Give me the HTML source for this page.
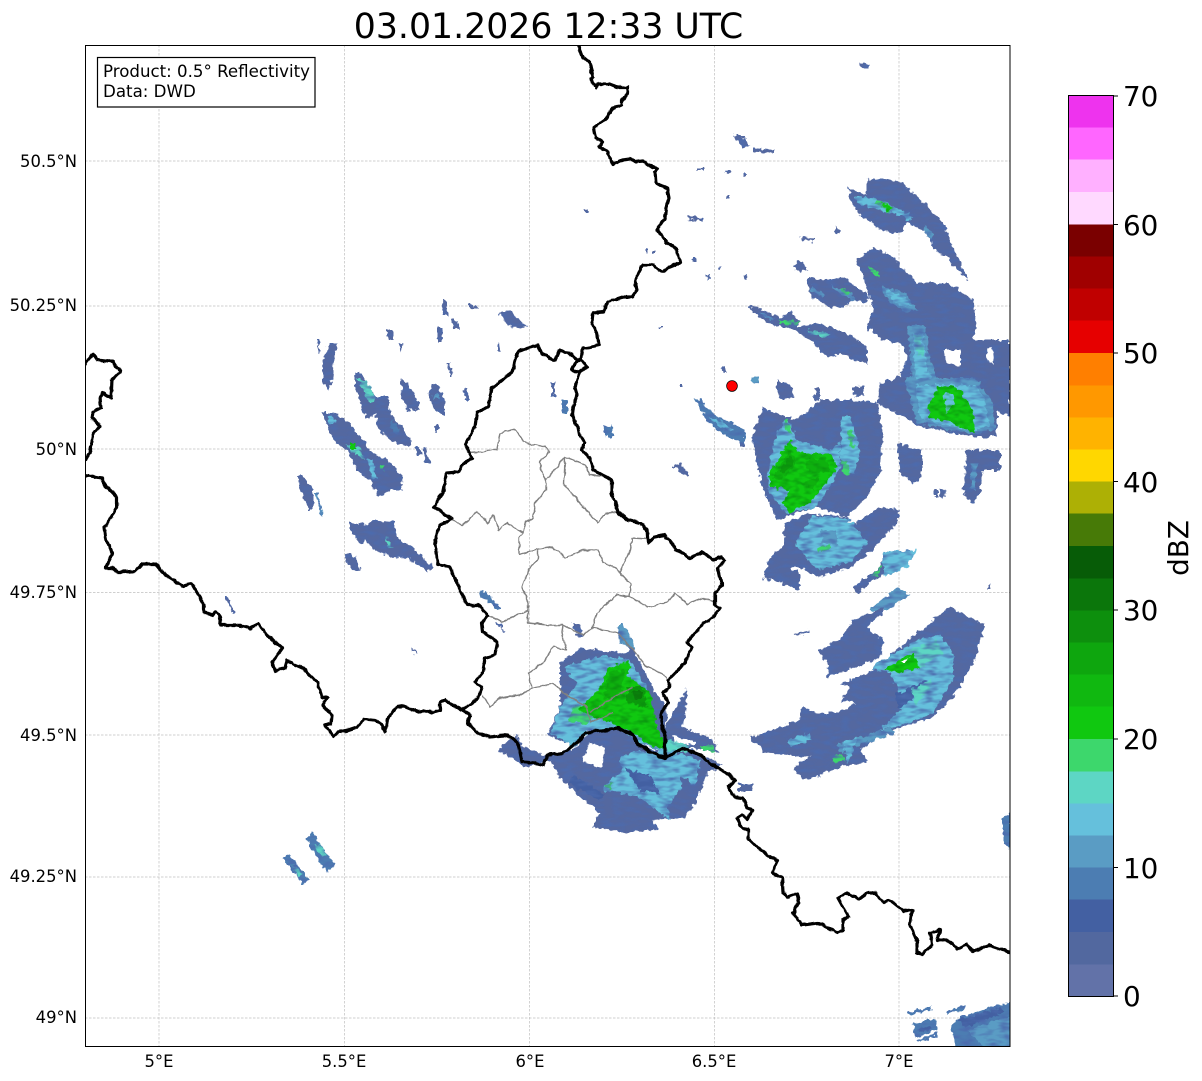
<!DOCTYPE html>
<html><head><meta charset="utf-8"><title>Radar</title>
<style>
html,body{margin:0;padding:0;background:#fff;width:1202px;height:1081px;overflow:hidden}
svg{display:block}
text{font-family:"DejaVu Sans",sans-serif;fill:#000}
.t{font-size:16.4px}
.c{font-size:27.8px}
.a{fill:#5468a0}.b{fill:#4360a2}.d{fill:#4c7db2}.e{fill:#5a9cc4}.f{fill:#65c0dc}.h{fill:#5dd6c4}.i{fill:#3dd76c}.j{fill:#10c810}.k{fill:#0eb10e}.l{fill:#0c9a0c}.m{fill:#0b7a0b}.w{fill:#fff}
</style></head><body>
<svg xmlns="http://www.w3.org/2000/svg" width="1202" height="1081" viewBox="0 0 1202 1081">
<defs>
<clipPath id="ax"><rect x="85" y="45" width="925" height="1001"/></clipPath>
<filter id="ro" filterUnits="userSpaceOnUse" x="85" y="45" width="925" height="1001" color-interpolation-filters="sRGB">
<feTurbulence type="fractalNoise" baseFrequency="0.2" numOctaves="2" seed="4" result="t1"/>
<feDisplacementMap in="SourceGraphic" in2="t1" scale="7" xChannelSelector="R" yChannelSelector="G" result="d"/>
<feTurbulence type="fractalNoise" baseFrequency="0.08 0.22" numOctaves="2" seed="11" result="n"/>
<feColorMatrix in="n" type="matrix" values="0 0 0 0 .30  0 0 0 0 .42  0 0 0 0 .68  2.3 0 0 0 -.95" result="o"/>
<feComposite in="o" in2="d" operator="in" result="oc"/>
<feMerge><feMergeNode in="d"/><feMergeNode in="oc"/></feMerge>
</filter>
<filter id="gr" filterUnits="userSpaceOnUse" x="85" y="45" width="925" height="1001" color-interpolation-filters="sRGB">
<feTurbulence type="fractalNoise" baseFrequency="0.2" numOctaves="2" seed="4" result="t1"/>
<feDisplacementMap in="SourceGraphic" in2="t1" scale="7" xChannelSelector="R" yChannelSelector="G" result="d"/>
<feTurbulence type="fractalNoise" baseFrequency="0.1 0.2" numOctaves="2" seed="21" result="n"/>
<feColorMatrix in="n" type="matrix" values="0 0 0 0 .04  0 0 0 0 .55  0 0 0 0 .06  2 0 0 0 -.85" result="o"/>
<feComposite in="o" in2="d" operator="in" result="oc"/>
<feMerge><feMergeNode in="d"/><feMergeNode in="oc"/></feMerge>
</filter>
<filter id="ho" filterUnits="userSpaceOnUse" x="85" y="45" width="925" height="1001" color-interpolation-filters="sRGB">
<feTurbulence type="fractalNoise" baseFrequency="0.2" numOctaves="2" seed="4"/>
<feDisplacementMap in="SourceGraphic" scale="5" xChannelSelector="R" yChannelSelector="G"/>
</filter>
<filter id="wg" filterUnits="userSpaceOnUse" x="85" y="45" width="925" height="1001" color-interpolation-filters="sRGB">
<feTurbulence type="fractalNoise" baseFrequency="0.14" numOctaves="2" seed="7"/>
<feDisplacementMap in="SourceGraphic" scale="3.5" xChannelSelector="R" yChannelSelector="G"/>
</filter>
</defs>
<text x="548.5" y="38" text-anchor="middle" style="font-size:34.7px">03.01.2026 12:33 UTC</text>
<rect x="85" y="45" width="925" height="1001" fill="#fff"/>
<g clip-path="url(#ax)">
<g stroke="#c0c0c0" stroke-width=".7" stroke-dasharray="2.5 1.5" fill="none">
<path d="M159 45V1046M344.5 45V1046M529.5 45V1046M714.5 45V1046M899 45V1046M85 161H1010M85 306H1010M85 449H1010M85 592.5H1010M85 735H1010M85 877H1010M85 1018H1010"/>
</g>
<g filter="url(#ro)">
<!-- NE band top -->
<polygon class="a" points="848,188 867,195 867,180 883,178 903,183 923,202 943,223 950,240 968,280 957,270 947,257 937,253 927,233 907,222 900,233 880,230 857,212 850,200"/>
<polygon class="f" points="855,197 873,198 897,208 913,217 910,220 890,212 870,207 857,203"/>
<polygon class="i" points="875,199 895,208 890,212 875,204"/>
<polygon class="e" points="925,225 934,236 931,239 923,230"/>
<polygon class="a" points="792,267 800,261 808,268 800,273"/>
<polygon class="a" points="807,277 823,280 843,277 870,297 867,303 853,300 843,308 830,307 813,298 808,287"/>
<polygon class="e" points="811,286 825,295 822,297 811,291"/>
<polygon class="e" points="830,285 850,293 856,301 838,293"/>
<polygon class="i" points="842,288 850,293 847,295 840,291"/>
<polygon class="a" points="748,305 763,310 780,317 790,312 800,322 797,327 817,323 847,333 867,347 867,363 853,360 840,353 827,357 810,340 800,333 787,327 773,325 760,318"/>
<polygon class="i" points="778,320 800,322 797,325 780,324"/>
<polygon class="e" points="757,311 775,318 770,320"/>
<polygon class="h" points="808,330 832,334 826,337 810,334"/>
<!-- NE main -->
<polygon class="a" points="857,260 873,247 893,257 917,283 947,283 973,300 977,327 973,340 1010,340 1010,417 997,410 997,437 973,437 917,425 877,403 880,383 900,377 907,357 900,343 883,340 867,327 873,310 867,287"/>
<polygon class="e" points="882,286 905,293 918,310 905,312 885,298"/>
<polygon class="f" points="886,289 904,296 912,306 902,307 888,296"/>
<polygon class="e" points="908,325 925,325 930,360 938,380 912,385 910,355"/>
<polygon class="f" points="913,333 923,333 926,360 932,382 916,382 914,355"/>
<polygon class="h" points="914,335 921,335 924,355 917,355"/>
<polygon class="e" points="905,378 975,378 992,400 995,430 972,434 917,423"/>
<polygon class="f" points="915,385 975,385 985,400 990,425 972,431 937,423 920,418"/>
<polygon class="i" points="869,266 878,272 880,278 872,274"/>
<!-- small east -->
<polygon class="a" points="898,443 922,450 922,477 913,483 900,473"/>
<polygon class="a" points="967,450 1000,450 1000,470 983,470 980,493 973,503 963,493"/>
<polygon class="e" points="972,463 977,463 975,490 970,490"/>
<polygon class="a" points="777,380 790,385 793,397 783,400 777,392"/>
<polygon class="a" points="815,387 820,388 820,399 814,400"/>
<polygon class="a" points="853,388 862,385 864,396 855,398"/>
<polygon class="a" points="740,433 745,434 745,447 740,447"/>
<polygon class="a" points="934,489 937,489 937,498 934,498"/>
<polygon class="a" points="940,489 945,490 944,498 939,497"/>
<polygon class="e" points="752,377 758,378 758,383 752,382"/>
<!-- central storm -->
<polygon class="a" points="763,407 780,415 797,420 820,400 853,400 877,403 883,433 880,473 867,497 847,517 817,507 793,515 777,520 763,490 752,437"/>
<polygon class="f" points="772,447 783,420 790,423 797,440 830,450 840,443 840,467 830,487 815,508 787,513 773,498 767,487"/>
<polygon class="f" points="842,417 850,417 860,450 855,473 847,473 840,457"/>
<polygon class="i" points="783,420 788,420 792,433 786,431"/>
<polygon class="i" points="840,460 848,463 850,475 845,475"/>
<polygon class="i" points="847,430 852,432 855,448 850,447"/>
<!-- lower storm -->
<polygon class="a" points="785,523 807,513 847,517 855,523 880,507 900,510 897,523 873,550 850,567 818,577 800,567 773,570 763,580 770,557 783,547"/>
<polygon class="f" points="794,543 813,515 850,519 868,543 850,562 818,570"/>
<polygon class="i" points="818,548 830,544 829,550 820,552"/>
<polygon class="e" points="820,530 835,530 838,545 822,543"/>
<polygon class="a" points="770,558 800,573 800,590 763,578"/>
<!-- SE small -->
<polygon class="a" points="853,587 880,567 883,560 890,570 870,583 857,593"/>
<polygon class="f" points="883,553 917,550 907,567 883,577"/>
<polygon class="i" points="872,574 882,566 878,576"/>
<polygon class="e" points="870,610 897,587 910,595 887,610"/>
<polygon class="a" points="883,607 870,618 875,610"/>
<!-- big lower band -->
<polygon class="a" points="818,650 840,640 853,620 883,607 883,613 867,627 883,640 880,657 857,667 827,677 828,665"/>
<polygon class="a" points="750,738 800,720 802,708 823,713 840,713 855,703 840,702 850,687 840,683 868,673 950,607 985,625 973,663 953,697 933,717 883,733 860,750 867,762 840,767 807,780 793,770 810,757 767,753"/>
<polygon class="f" points="870,668 917,640 940,635 953,653 953,677 933,713 897,727 880,730 900,710 900,693 890,673"/>
<polygon class="b" points="895,695 925,680 928,688 900,708"/>
<polygon class="e" points="835,745 890,728 895,733 840,752"/>
<polygon class="h" points="907,650 937,640 943,653 917,670"/>
<polygon class="h" points="912,690 933,678 930,690 915,705"/>
<polygon class="f" points="788,740 810,733 812,740 790,747"/>
<polygon class="f" points="843,743 857,737 853,753 847,763"/>
<polygon class="i" points="832,757 843,753 845,760 833,762"/>
<polygon class="a" points="793,633 810,630 810,633 794,635"/>
<polygon class="a" points="797,762 817,756 816,766 800,770"/>
<!-- Lux storm -->
<polygon class="a" points="560,663 580,648 620,653 630,650 617,625 627,630 637,657 647,677 653,690 662,700 667,713 665,727 687,688 688,690 683,727 713,740 718,753 693,747 665,753 640,743 627,733 618,728 590,730 580,738 575,747 547,735 560,707"/>
<polygon class="e" points="617,625 623,625 633,640 635,650 620,643"/>
<polygon class="a" points="497,750 513,742 547,757 577,747 590,730 618,728 640,743 665,757 687,748 723,765 707,773 697,800 687,817 653,820 657,830 627,833 592,827 600,813 577,795 560,777 550,760 527,767"/>
<polygon class="f" points="562,703 577,683 563,667 603,655 630,660 647,687 655,720 665,753 640,743 618,728 590,730 573,747 550,733"/>
<polygon class="i" points="575,705 600,712 585,725 568,720"/>
<polygon class="h" points="664,738 690,745 686,752 668,752"/>
<polygon class="i" points="700,745 714,745 714,752 702,752"/>
<polygon class="f" points="603,787 620,773 620,757 640,750 683,760 680,790 667,807 670,820 653,807 637,797 603,790"/>
<polygon class="b" points="625,768 650,775 660,795 640,790"/>
<polygon class="f" points="650,745 700,760 695,785 680,775"/>
<polygon class="b" points="573,775 605,795 598,800 568,783"/>
<polygon class="a" points="517,735 522,745 500,750 505,742"/>
<polygon class="i" points="604,786 612,783 610,790"/>
<!-- West -->
<polygon class="a" points="355,372 360,372 375,397 388,397 390,413 412,440 410,447 392,442 378,428 375,413 367,420 363,410 355,387"/>
<polygon class="h" points="357,377 368,383 375,400 368,402"/>
<polygon class="d" points="392,420 400,428 398,435 390,428"/>
<polygon class="a" points="322,412 333,412 350,423 360,437 372,453 385,457 403,477 402,490 392,490 378,497 370,480 357,470 347,450 335,443 327,427"/>
<polygon class="h" points="345,443 362,450 365,460 353,453"/>
<polygon class="f" points="327,416 334,417 335,424 329,424"/>
<polygon class="f" points="366,458 372,460 378,480 372,478"/>
<polygon class="i" points="380,465 383,465 384,470 381,470"/>
<polygon class="a" points="297,475 302,475 313,490 313,510 308,510 300,490"/>
<polygon class="e" points="315,493 318,493 323,515 320,515"/>
<polygon class="a" points="350,522 365,525 373,520 393,522 400,540 412,547 432,567 428,572 412,560 395,557 378,553 365,540 360,543 350,530"/>
<polygon class="h" points="385,537 390,541 392,548 387,546"/>
<polygon class="a" points="345,555 352,552 360,570 357,572 350,567"/>
<polygon class="a" points="322,363 330,342 337,342 332,380 328,390 322,380"/>
<polygon class="a" points="317,339 319,339 320,353 318,353"/>
<polygon class="a" points="387,330 393,330 393,340 387,340"/>
<polygon class="a" points="398,343 404,343 402,353"/>
<polygon class="a" points="400,378 407,383 418,400 420,410 407,410 402,397"/>
<polygon class="a" points="428,393 435,383 445,400 445,417 432,407"/>
<polygon class="e" points="434,395 440,395 440,399 434,399"/>
<polygon class="a" points="463,390 466,389 470,400 465,400"/>
<polygon class="a" points="447,363 449,363 453,377 451,377"/>
<polygon class="a" points="498,313 508,310 528,327 512,328"/>
<polygon class="a" points="442,300 447,300 447,315 443,315"/>
<polygon class="a" points="438,327 443,327 442,342 438,342"/>
<polygon class="a" points="468,303 477,307 477,309 468,307"/>
<polygon class="a" points="452,320 458,320 460,330 454,328"/>
<polygon class="a" points="497,343 499,343 500,350 497,350"/>
<polygon class="a" points="435,425 438,425 438,433 436,433"/>
<polygon class="a" points="416,445 419,445 421,455 417,455"/>
<polygon class="a" points="423,448 427,449 430,463 426,463"/>
<polygon class="d" points="478,593 485,592 502,608 498,610"/>
<polygon class="a" points="495,622 498,622 506,632 504,632"/>
<polygon class="a" points="412,648 414,648 417,655 415,655"/>
<polygon class="a" points="225,597 228,597 235,613 232,613"/>
<polygon class="a" points="572,623 580,624 584,637 576,636"/>
<polygon class="a" points="552,382 555,382 555,398 552,398"/>
<polygon class="d" points="562,400 568,400 568,413 562,413"/>
<polygon class="d" points="603,427 613,426 614,437 606,437"/>
<polygon class="a" points="673,465 680,464 689,473 686,476"/>
<polygon class="d" points="693,398 700,400 715,415 745,430 745,445 720,432 707,420"/>
<polygon class="f" points="709,418 722,421 735,431 722,429"/>
<!-- scattered -->
<polygon class="a" points="858,62 870,65 868,69 860,66"/>
<polygon class="a" points="732,135 742,135 750,146 744,148"/>
<polygon class="a" points="752,148 775,150 775,153 752,151"/>
<polygon class="a" points="697,168 704,168 704,170 697,170"/>
<polygon class="a" points="725,172 731,170 731,172 725,174"/>
<polygon class="a" points="743,172 747,172 747,176 743,176"/>
<polygon class="a" points="726,195 730,195 730,198 726,198"/>
<polygon class="a" points="687,216 703,218 703,221 687,219"/>
<polygon class="a" points="583,209 589,210 588,213 584,213"/>
<polygon class="a" points="645,250 648,250 648,253 645,253"/>
<polygon class="a" points="651,250 656,250 656,252 651,252"/>
<polygon class="a" points="691,258 696,258 696,262 692,262"/>
<polygon class="a" points="706,274 710,274 711,279 707,279"/>
<polygon class="a" points="718,267 720,267 720,270 718,270"/>
<polygon class="a" points="743,275 748,276 747,279 744,279"/>
<polygon class="a" points="801,237 814,238 814,241 801,240"/>
<polygon class="a" points="834,225 838,227 841,234 837,233"/>
<polygon class="a" points="720,367 725,366 727,372 722,372"/>
<polygon class="a" points="680,384 683,384 683,387 680,387"/>
<polygon class="a" points="988,585 991,584 990,589 987,589"/>
<polygon class="a" points="660,326 663,326 663,329 660,329"/>
<polygon class="a" points="739,784 753,784 753,792 739,792"/>
<!-- East edge -->
<polygon class="d" points="1002,820 1010,813 1010,850 1003,842"/>
<!-- SE corner -->
<polygon class="d" points="950,1027 960,1017 1000,1005 1012,1003 1012,1048 957,1048"/>
<polygon class="e" points="968,1030 1012,1015 1012,1048 985,1048"/>
<polygon class="b" points="958,1020 1000,1008 1005,1012 965,1028"/>
<polygon class="d" points="913,1023 935,1019 937,1030 915,1037"/>
<polygon class="b" points="917,1029 933,1025 933,1028 919,1033"/>
<polygon class="d" points="917,1040 938,1033 939,1036 917,1042"/>
<polygon class="d" points="909,1012 931,1007 931,1010 910,1015"/>
<polygon class="d" points="945,1012 966,1005 966,1008 945,1015"/>
<!-- SW -->
<polygon class="d" points="283,858 290,855 310,880 303,885"/>
<polygon class="h" points="290,864 294,863 302,875 298,877"/>
<polygon class="d" points="305,838 313,833 335,865 327,872"/>
<polygon class="h" points="315,845 320,843 327,855 322,857"/>
</g>
<!-- green cores -->
<g filter="url(#gr)">
<polygon class="j" points="882,203 893,208 889,211 881,206"/>
<polygon class="j" points="937,387 957,387 973,410 975,433 953,423 943,420 930,418 928,407"/>
<polygon class="f" points="944,393 952,393 955,405 946,412"/>
<polygon class="j" points="770,473 790,440 798,453 830,453 837,467 823,487 810,503 790,513 783,503 790,490 770,487"/>
<polygon class="k" points="773,477 790,450 797,463 780,480"/>
<polygon class="k" points="800,483 820,477 813,490"/>
<polygon class="l" points="779,472 790,456 793,462 783,475"/>
<polygon class="k" points="805,460 825,458 830,470 810,473"/>
<polygon class="j" points="883,670 913,653 920,668 897,672"/>
<polygon class="j" points="608,667 630,662 628,677 650,692 657,727 665,748 650,745 633,733 620,727 590,715 577,710 595,693 603,683"/>
<polygon class="k" points="610,672 625,670 622,690 605,700"/>
<polygon class="k" points="607,680 618,678 618,697 603,700"/>
<polygon class="l" points="627,687 643,687 647,707 627,703"/>
<polygon class="m" points="632,691 642,690 642,699 634,699"/>
<polygon class="j" points="350,443 356,443 356,449 350,449"/>
</g>
<!-- holes in the echoes -->
<g filter="url(#ho)">
<polygon class="w" points="943,350 960,350 960,367 947,362"/>
<polygon class="w" points="986,347 992,347 994,365 988,362"/>
<polygon class="w" points="778,520 818,507 818,510 783,522"/>
<polygon class="w" points="847,522 880,500 880,507 855,523"/>
<polygon class="w" points="900,663 910,656 905,663"/>
<polygon class="w" points="590,742 605,748 602,767 582,762"/>
<polygon class="w" points="672,735 695,742 695,745 675,742"/>
</g>
<!-- canton lines -->
<g filter="url(#wg)">
<g fill="none" stroke="#808080" stroke-width="1.4" stroke-linejoin="round">
<polyline points="470,453 483,452 497,449 500,433 515,429 523,442 545,447 550,452 540,462 542,473 546,480 546,490 535,503 533,518 526,522 523,533"/>
<polyline points="452,520 462,525 477,512 488,523 493,515 499,530 507,523 523,533 519,538 519,554 538,549 552,547 565,558 583,550 598,550 603,563 617,568 620,573 631,585 630,597"/>
<polyline points="546,480 565,457 585,465 590,475 600,476"/>
<polyline points="565,457 564,485 585,508 598,523 605,514 618,512"/>
<polyline points="620,573 630,550 632,538 647,539"/>
<polyline points="538,549 538,558 527,573 522,587 528,603 528,623 548,625 563,625 583,635 592,628 597,613 617,595 630,597 648,607 668,602 675,593 688,604 703,598 715,602"/>
<polyline points="488,615 503,622 528,610"/>
<polyline points="563,625 562,633 566,650 553,647 543,663 529,673 532,688 553,683 563,693 587,707 590,722 613,713"/>
<polyline points="532,688 520,695 500,698 490,707 483,695"/>
<polyline points="592,628 617,632 633,650 647,667 665,675 668,680"/>
<polyline points="633,687 613,697 590,713"/>
</g>
<!-- national borders -->
<g fill="none" stroke="#000" stroke-width="3.2" stroke-linejoin="round" stroke-linecap="round">
<polyline points="85,365 86,363 93,354 97,360 113,362 117,368 121,371 112,380 111,398 103,393 100,397 101,408 93,412 92,418 100,426 93,435 90,453 85,460"/>
<polyline points="85,475 102,478 105,485 117,497 117,507 110,520 104,528 106,540 112,553 106,568 112,568 118,572 125,572 135,571 142,564 156,564 165,575 183,586 192,584 204,605 204,612 213,615 215,612 219,615 221,625 237,625 250,628 258,624 267,635 282,648 277,655 272,662 275,671 285,668 287,661 303,668 317,682 322,697 327,698 323,705 332,715 331,723 325,725 333,737 338,732 348,730 357,727 364,719 375,720 380,723 385,732 388,718 397,707 403,706 418,712 428,711 433,712 440,710 440,702 445,700 460,709 462,710"/>
<polyline points="578,45 583,57 590,63 593,77 591,79 596,88 598,84 610,84 617,87 628,87 628,93 622,100 622,105 613,108 605,120 594,128 596,138 603,142 599,147 607,151 613,164 622,160 630,159 636,162 643,161 652,167 658,168 655,172 656,183 667,188 669,198 666,208 665,218 657,230 666,242 677,250 680,263 668,267 663,272 652,265 643,265 639,272 635,282 637,290 632,297 623,297 608,302 603,312 593,313 592,322 597,332 599,345 590,347 583,348 581,360"/>
<polyline points="538,345 518,351 512,372 492,388 488,407 477,412 475,427 465,445 472,458 462,465 458,472 447,473 443,493 434,507 452,519 440,525 435,540 438,565 450,567 467,605 478,605 488,615 482,623 483,632 497,642 495,655 485,658 483,672 475,682 482,688 478,698 462,710"/>
<polyline points="538,345 542,354 555,360 559,351 568,352 577,360 582,360 587,367 580,372 572,370 577,360"/>
<polyline points="580,372 575,387 577,395 573,407 572,415 578,427 580,437 585,443 582,450 590,458 593,470 602,475 612,480 612,493 618,512 628,520 640,523 647,530 648,543 655,537 665,535 677,550 690,558 703,552 713,560 722,557 725,560 718,568 720,577 722,585 715,593 715,605 720,608 715,615 700,627 687,642 692,647 685,663 668,680 670,687 662,693 668,702 660,715 665,737 665,758"/>
<polyline points="462,710 470,715 468,723 478,733 490,737 508,735 518,743 522,762 535,763 543,765 548,755 563,753 577,743 585,733 618,728 633,735 638,745 653,753 665,758 683,748 700,755 710,763 725,772 735,780 728,787 735,797 743,798 747,808 752,810 748,819 742,815 737,818 742,828 748,829 748,838 757,847 772,858 777,860 773,873 782,877 783,892 787,897 797,894 799,902 793,913 802,925 818,923 838,933 843,930 843,920 848,916 838,898 847,893 859,899 868,893 876,893 883,903 889,900 903,911 912,910 910,925 917,942 917,952 922,954 932,945 930,933 940,930 937,940 947,939 957,949 967,944 973,952 988,945 1003,950 1012,952"/>
</g>
</g>
<circle cx="732" cy="386" r="5.4" fill="#f00" stroke="#000" stroke-width=".7"/>
<rect x="97.5" y="57.5" width="217.5" height="49.5" fill="#fff" stroke="#000" stroke-width="1.2"/>
<text x="103" y="77" textLength="207" lengthAdjust="spacingAndGlyphs" style="font-size:16.67px">Product: 0.5° Reflectivity</text>
<text x="103" y="97" style="font-size:16.67px">Data: DWD</text>
</g>
<rect x="85.5" y="45.5" width="924.5" height="1001" fill="none" stroke="#000" stroke-width="1"/>
<g class="t">
<text class="t" x="77" y="167" text-anchor="end">50.5°N</text>
<text class="t" x="77" y="311" text-anchor="end">50.25°N</text>
<text class="t" x="77" y="455" text-anchor="end">50°N</text>
<text class="t" x="77" y="598" text-anchor="end">49.75°N</text>
<text class="t" x="77" y="741" text-anchor="end">49.5°N</text>
<text class="t" x="77" y="882" text-anchor="end">49.25°N</text>
<text class="t" x="77" y="1023" text-anchor="end">49°N</text>
<text class="t" x="159" y="1067" text-anchor="middle">5°E</text>
<text class="t" x="344" y="1067" text-anchor="middle">5.5°E</text>
<text class="t" x="530" y="1067" text-anchor="middle">6°E</text>
<text class="t" x="714" y="1067" text-anchor="middle">6.5°E</text>
<text class="t" x="899" y="1067" text-anchor="middle">7°E</text>
</g>
<!-- colorbar -->
<g shape-rendering="crispEdges">
<rect x="1068" y="964" width="45" height="32.5" fill="#6272a8"/>
<rect x="1068" y="932" width="45" height="32.5" fill="#52689f"/>
<rect x="1068" y="899" width="45" height="33" fill="#4360a2"/>
<rect x="1068" y="867" width="45" height="32.5" fill="#4c7db2"/>
<rect x="1068" y="835" width="45" height="32.5" fill="#5a9cc4"/>
<rect x="1068" y="803" width="45" height="32.5" fill="#65c0dc"/>
<rect x="1068" y="771" width="45" height="32.5" fill="#5dd6c4"/>
<rect x="1068" y="739" width="45" height="32.5" fill="#3dd76c"/>
<rect x="1068" y="706" width="45" height="33" fill="#10c810"/>
<rect x="1068" y="674" width="45" height="32.5" fill="#10b810"/>
<rect x="1068" y="642" width="45" height="32.5" fill="#0ea60e"/>
<rect x="1068" y="610" width="45" height="32.5" fill="#0d8f0d"/>
<rect x="1068" y="578" width="45" height="32.5" fill="#0b760b"/>
<rect x="1068" y="546" width="45" height="32.5" fill="#075c07"/>
<rect x="1068" y="513" width="45" height="33" fill="#477a07"/>
<rect x="1068" y="481" width="45" height="32.5" fill="#adb005"/>
<rect x="1068" y="449" width="45" height="32.5" fill="#ffd700"/>
<rect x="1068" y="417" width="45" height="32.5" fill="#ffb300"/>
<rect x="1068" y="385" width="45" height="32.5" fill="#ff9800"/>
<rect x="1068" y="353" width="45" height="32.5" fill="#ff7f00"/>
<rect x="1068" y="320" width="45" height="33" fill="#e60000"/>
<rect x="1068" y="288" width="45" height="32.5" fill="#c00000"/>
<rect x="1068" y="256" width="45" height="32.5" fill="#a00000"/>
<rect x="1068" y="224" width="45" height="32.5" fill="#7a0000"/>
<rect x="1068" y="192" width="45" height="32.5" fill="#ffd9ff"/>
<rect x="1068" y="159" width="45" height="33" fill="#ffb0ff"/>
<rect x="1068" y="127" width="45" height="32.5" fill="#ff66ff"/>
<rect x="1068" y="95.5" width="45" height="32" fill="#ee33ee"/>
</g>
<rect x="1068.5" y="95.5" width="45" height="901" fill="none" stroke="#000" stroke-width="1"/>
<path d="M1113 96h5M1113 224.5h5M1113 353h5M1113 481.5h5M1113 610h5M1113 739h5M1113 867.5h5M1113 996h5" stroke="#000" stroke-width="1"/>
<text class="c" x="1123" y="106">70</text>
<text class="c" x="1123" y="235">60</text>
<text class="c" x="1123" y="363">50</text>
<text class="c" x="1123" y="492">40</text>
<text class="c" x="1123" y="620">30</text>
<text class="c" x="1123" y="749">20</text>
<text class="c" x="1123" y="878">10</text>
<text class="c" x="1123" y="1006">0</text>
<text class="c" transform="translate(1188,548) rotate(-90)" text-anchor="middle">dBZ</text>
</svg>
</body></html>
